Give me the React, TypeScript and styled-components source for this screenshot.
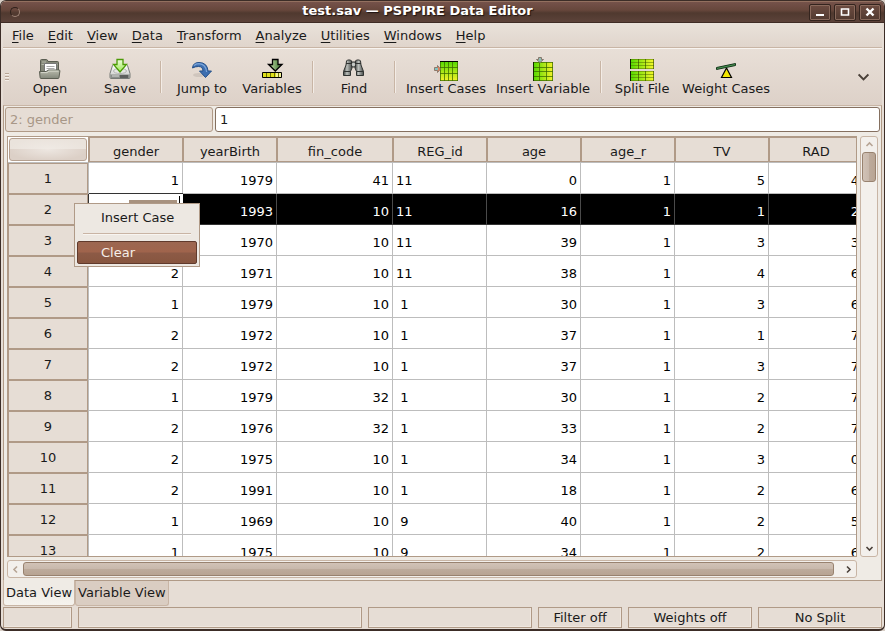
import React from "react";
import styled, { createGlobalStyle, css } from "styled-components";

const c = {
  base: "#e6ddd5",
  light: "#efebe5",
  line: "#b09a87",
  soft: "#c8b5a5",
  grid: "#bdbdbd",
  text: "#1a1a1a",
};

const GlobalStyle = createGlobalStyle`
  * { box-sizing: border-box; }
  body { margin: 0; background: #d9d0c8; }
  body, button, input, table { font: 13px/16px "DejaVu Sans", sans-serif; color: ${c.text}; }
  button { margin: 0; padding: 0; border: 0; background: none; }
`;

const Window = styled.div`
  display: flex;
  flex-direction: column;
  height: 100vh;
  min-height: 320px;
  overflow: hidden;
  border: 1px solid #3c2d27;
  border-bottom-width: 2px;
  border-radius: 6px;
  background: ${c.base};
`;

const TitleBar = styled.header`
  display: flex;
  align-items: center;
  height: 22px;
  flex: none;
  padding: 0 3px 0 9px;
  border-top: 1px solid #93705f;
  border-bottom: 1px solid #3f2c25;
  background: linear-gradient(#75524a, #67473c 40%, #50392f 55%, #5c433a);
`;

const WindowMenu = styled.button`
  width: 10px;
  height: 10px;
  border: 1px solid #2f211c;
  border-bottom-color: #a08578;
  border-right-color: #a08578;
  border-radius: 50%;
`;

const Title = styled.h1`
  flex: 1;
  margin: 0;
  padding: 0 0 2px 6px;
  font-size: 13px;
  line-height: 16px;
  text-align: center;
  color: #fff;
  text-shadow: 1px 1px 1px #1d1310;
`;

const WindowButtons = styled.div`
  display: flex;
  gap: 3px;
`;

const WindowButton = styled.button`
  width: 22px;
  height: 17px;
  border: 1px solid #34241e;
  border-radius: 2px;
  box-shadow: inset 0 0 0 1px #8a6a5c;
  background: linear-gradient(#6d4c41, #523a30);
  svg { display: block; margin: 0 auto; }
`;

const MenuBar = styled.nav`
  display: flex;
  align-items: center;
  flex: none;
  height: 25px;
  margin: 0 2px;
  padding: 2px 2px 0;
  border-bottom: 1px solid ${c.soft};
  background: linear-gradient(#e9e2da, #e0d5cc);
`;

const MenuItem = styled.button`
  padding: 0 7px;
  u { text-underline-offset: 2px; }
`;

const Toolbar = styled.div`
  display: flex;
  align-items: center;
  flex: none;
  height: 57px;
  margin: 0 2px;
  padding: 0 13px 0 2px;
  border-top: 1px solid #f8f4f0;
  background: linear-gradient(#e8dfd7, #ddd1c8);
`;

const Grip = styled.span`
  width: 4px;
  height: 8px;
  margin-right: 6px;
  background: repeating-linear-gradient(#b8a595 0 1px, #f3ede7 1px 2px, transparent 2px 3px);
`;

const ToolButton = styled.button`
  display: flex;
  flex-direction: column;
  align-items: center;
  min-width: 70px;
  padding: 0 5px;
  white-space: nowrap;
  svg { display: block; overflow: visible; }
`;

const ToolSeparator = styled.span`
  width: 2px;
  height: 32px;
  margin: 0 5px;
  border-left: 1px solid ${c.soft};
  border-right: 1px solid #f3ece6;
`;

const Overflow = styled.button`
  margin-left: auto;
  color: #4a4039;
  svg { display: block; }
`;

const Notebook = styled.main`
  display: flex;
  flex-direction: column;
  flex: 1;
  min-height: 0;
  margin: 0 2px;
  padding: 1px 1px 2px;
  border: 1px solid ${c.line};
  border-top-color: ${c.soft};
  background: ${c.light};
`;

const EntryRow = styled.div`
  display: grid;
  grid-template-columns: 208px 1fr;
  gap: 2px;
  flex: none;
`;

const Entry = styled.input`
  width: 100%;
  min-width: 0;
  height: 25px;
  padding: 0 4px;
  border: 1px solid #857060;
  border-radius: 3px;
  outline: 0;
  background: #fff;
  &:disabled {
    color: #a89787;
    background: ${c.base};
    border-color: ${c.line};
  }
`;

const SheetArea = styled.div`
  display: grid;
  grid-template-columns: minmax(0, 1fr) 18px;
  grid-template-rows: minmax(0, 1fr) 18px;
  gap: 3px;
  flex: 1;
  min-height: 0;
  margin: 4px 2px 0 2px;
`;

const Sheet = styled.div`
  overflow: hidden;
  border: 1px solid ${c.line};
  background: #fff;
`;

const Table = styled.table`
  width: 855px;
  table-layout: fixed;
  border-collapse: separate;
  border-spacing: 0;
`;

const Col = styled.col<{ $width: number }>`
  width: ${(p) => p.$width}px;
`;

const headCell = css`
  padding: 0;
  font-weight: normal;
  text-align: center;
  background: ${c.base};
`;

const ColumnHead = styled.th`
  ${headCell}
  height: 26px;
  padding-top: 5px;
  border-bottom: 1px solid ${c.grid};
  box-shadow: inset 0 0 0 1px ${c.line};
`;

const Corner = styled.th`
  ${headCell}
  height: 26px;
  padding: 1px;
  background: #fff;
  border-bottom: 1px solid ${c.grid};
  border-right: 1px solid ${c.line};
`;

const CornerButton = styled.button`
  display: block;
  width: 78px;
  height: 23px;
  border: 1px solid #b5a08f;
  border-radius: 3px;
  background: radial-gradient(ellipse at center, #f1ece7cc, transparent 75%), linear-gradient(#eae3dc 50%, #dcd0c7 50%);
`;

const RowHead = styled.th`
  ${headCell}
  height: 31px;
  border-right: 1px solid ${c.grid};
  box-shadow: inset 0 0 0 1px ${c.line};
`;

const Cell = styled.td<{ $left?: boolean; $selected?: boolean }>`
  height: 31px;
  padding: 5px 3px 0;
  white-space: pre;
  text-align: ${(p) => (p.$left ? "left" : "right")};
  border-right: 1px solid ${(p) => (p.$selected ? "#4a4a4a" : c.grid)};
  border-bottom: 1px solid ${(p) => (p.$selected ? "#333" : c.grid)};
  color: ${(p) => (p.$selected ? "#fff" : "#000")};
  background: ${(p) => (p.$selected ? "#000" : "#fff")};
`;

const ActiveCell = styled.td`
  height: 31px;
  padding: 0;
  box-shadow: 0 -1px #333, -1px 0 #333;
  border-bottom: 1px solid #333;
`;

const CellInput = styled.input`
  display: block;
  width: 100%;
  height: 30px;
  padding: 5px 5px 0;
  border: 0;
  outline: 0;
  text-align: right;
  background:
    linear-gradient(#a8927f, #a8927f) right 6px top 6px / 48px 20px no-repeat,
    linear-gradient(#000, #000) right 3px top 2px / 1px 24px no-repeat,
    #fff;
`;

const ScrollBar = styled.div<{ $vertical?: boolean }>`
  display: flex;
  flex-direction: ${(p) => (p.$vertical ? "column" : "row")};
  border: 1px solid ${c.soft};
  border-radius: 3px;
  background: #f3f0ec;
`;

const ScrollArrow = styled.button<{ $dim?: boolean }>`
  display: flex;
  align-items: center;
  justify-content: center;
  flex: 0 0 15px;
  color: ${(p) => (p.$dim ? "#b7a595" : "#4a4039")};
`;

const Track = styled.div<{ $vertical?: boolean }>`
  flex: 1;
  padding: ${(p) => (p.$vertical ? "0 1px" : "1px 0")};
  margin: ${(p) => (p.$vertical ? "0" : "0 7px 0 0")};
`;

const Thumb = styled.div<{ $vertical?: boolean }>`
  height: ${(p) => (p.$vertical ? "30px" : "14px")};
  border: 1px solid #98826f;
  border-radius: 3px;
  background: linear-gradient(${(p) => (p.$vertical ? "to right" : "to bottom")}, #d1c2b6, #c8b8ab 50%, #bdab9c 50%, #b8a493);
`;

const Tabs = styled.div`
  display: flex;
  flex: none;
  height: 25px;
  margin: 0 2px 1px;
`;

const Tab = styled.button<{ $current?: boolean }>`
  height: ${(p) => (p.$current ? "26px" : "25px")};
  padding: 0 2px;
  margin-top: ${(p) => (p.$current ? "-1px" : "0")};
  border: 1px solid ${c.soft};
  border-top: 0;
  border-radius: 0 0 3px 3px;
  background: ${(p) => (p.$current ? "linear-gradient(#efebe5 45%, #f6f3ee)" : "#dacdc2")};
`;

const StatusBar = styled.footer`
  display: grid;
  grid-template-columns: 69px 1fr 164px 84px 124px 124px;
  gap: 6px;
  flex: none;
  margin: 0 2px 1px;
`;

const Status = styled.div`
  height: 21px;
  padding-top: 2px;
  text-align: center;
  border: 1px solid ${c.line};
  box-shadow: inset -1px -1px #efe7e0;
`;

const ContextMenu = styled.div`
  position: absolute;
  left: 74px;
  top: 203px;
  width: 126px;
  padding: 2px;
  border: 1px solid ${c.line};
  background: #ede8e2;
`;

const ContextItem = styled.button<{ $active?: boolean }>`
  display: block;
  width: 100%;
  height: 23px;
  padding: 0 23px;
  text-align: left;
  white-space: nowrap;
  border: 1px solid ${(p) => (p.$active ? "#603a2c" : "transparent")};
  border-radius: 2px;
  color: ${(p) => (p.$active ? "#f6eee8" : c.text)};
  background: ${(p) => (p.$active ? "linear-gradient(#9c6751, #a0644c 48%, #8c5a46 52%, #87553f)" : "none")};
`;

const ContextRule = styled.hr`
  height: 2px;
  margin: 4px 6px 6px;
  border: 0;
  border-top: 1px solid #c9b4a4;
  background: #f8f5f1;
`;

const Chevron = ({ d, size = 9 }: { d: string; size?: number }) => (
  <svg width={size} height={size} viewBox="0 0 9 9" fill="none" stroke="currentColor" strokeWidth="1.6">
    <path d={d} />
  </svg>
);

const OpenIcon = () => (
  <svg width="24" height="24" viewBox="0 0 24 24">
    <defs>
      <linearGradient id="folder" x2="0" y2="1"><stop stopColor="#b9bbac" /><stop offset="1" stopColor="#83877a" /></linearGradient>
    </defs>
    <path d="M2.500 20V3.500q0-1 1-1h5q1 0 1.500 2h9.500q1 0 1 1V20z" fill="#858879" stroke="#5b5e52" />
    <path d="M4 5h4M3.500 7.500h16" stroke="#b3b6a8" />
    <path d="M6.500 6.500h12v10h-12z" fill="#fff" stroke="#777" />
    <path d="M8.500 9.500h8M8.500 11.500h8M8.500 13.500h6" stroke="#aaa" />
    <path d="M1.500 14.500h7l2-1.500h10.500q1 0 .9 1L21 20.500q-.2 1-1 1H3q-.8 0-.9-1z" fill="url(#folder)" stroke="#5b5e52" />
    <path d="M3 15.600h6l2-1.500h9.500" fill="none" stroke="#d5d7cc" />
  </svg>
);

const SaveIcon = () => (
  <svg width="24" height="24" viewBox="0 0 24 24">
    <defs>
      <linearGradient id="disk" x2="0" y2="1"><stop stopColor="#fff" /><stop offset="1" stopColor="#c4c6c2" /></linearGradient>
      <linearGradient id="green" x2="0" y2="1"><stop stopColor="#effde0" /><stop offset="1" stopColor="#9bea4f" /></linearGradient>
    </defs>
    <path d="M4.500 8.500q.3-1 1.200-1h12.600q1 0 1.200 1l2.500 8v4q0 1-1 1H3q-1 0-1-1v-4z" fill="url(#disk)" stroke="#777b77" />
    <path d="M2.500 17.500h19v3.500h-19z" fill="#8a8e8a" />
    <path d="M4 19h7" stroke="#d8dad8" /><path d="M13 18v3M15 18v3M17 18v3M19 18v3" stroke="#333" />
    <ellipse cx="12" cy="14" rx="6.500" ry="2.500" fill="#e6e7e5" stroke="#b5b7b3" />
    <path d="M9 2.500h6v5h3.500L12 15 5.500 7.500H9z" fill="url(#green)" stroke="#4b9a06" strokeWidth="1.300" />
  </svg>
);

const JumpIcon = () => (
  <svg width="24" height="24" viewBox="0 0 24 24">
    <ellipse cx="9" cy="18" rx="6" ry="2" fill="#cfc5bd" />
    <path d="M2.500 11Q3 5.500 9 5.500q8.500.2 9 8.500h3.500l-6 6.500-6-6.500H13q-.2-4.500-4.500-4.500Q5 9.500 2.500 11z" fill="#3e6fb0" stroke="#24508a" strokeLinejoin="round" />
    <path d="M4 8.700Q5.500 6.600 9 6.600q7 .4 7.600 8.400" fill="none" stroke="#7ba5da" strokeWidth="1.200" />
  </svg>
);

const VariablesIcon = () => (
  <svg width="24" height="24" viewBox="0 0 24 24">
    <defs><linearGradient id="dark"><stop stopColor="#1f431a" /><stop offset=".3" stopColor="#9fc088" /><stop offset="1" stopColor="#2f6a24" /></linearGradient></defs>
    <path d="M12.500 2.500h5.500v5h4L15.300 14 8.500 7.500h4z" fill="url(#dark)" stroke="#000" strokeWidth="1.300" />
    <path d="M2.500 15.500h19v5h-19z" fill="#dfe01d" stroke="#000" />
    <path d="M16 16h5v4h-5z" fill="#f2f29a" />
    <path d="M6.500 16v4M10.500 16v4M14.500 16v4M18.500 16v4" stroke="#6b6e00" />
  </svg>
);

const FindIcon = () => (
  <svg width="24" height="24" viewBox="0 0 24 24">
    <defs><linearGradient id="tube"><stop stopColor="#3b3f3d" /><stop offset=".4" stopColor="#bcc0bc" /><stop offset="1" stopColor="#484c4a" /></linearGradient></defs>
    <path d="M9 5h5v5H9z" fill="#868b87" stroke="#303331" />
    <path d="M4.500 4l1-1h3l1 1v4l.5 3-1.500 3.500v4H1.500v-4L4 8z" fill="url(#tube)" stroke="#303331" />
    <path d="M18.500 4l-1-1h-3l-1 1v4l-.5 3 1.500 3.500v4h7v-4L19 8z" fill="url(#tube)" stroke="#303331" />
    <path d="M4 6.500h5.500M13.500 6.500H19M2 14.500h6.500M14.500 14.500h7" stroke="#303331" />
    <circle cx="11.500" cy="7.500" r="1.700" fill="#c7cac7" />
  </svg>
);

const InsertCasesIcon = () => (
  <svg width="24" height="24" viewBox="0 0 24 24">
    <defs><linearGradient id="cases" x2="0" y2="1"><stop stopColor="#4fd800" /><stop offset="1" stopColor="#f6f22a" /></linearGradient></defs>
    <path d="M6 4h18v20H6z" fill="url(#cases)" />
    <path d="M6.500 4v20M10.500 4v20M14.500 4v20M18.500 4v20M23.500 4v20M6 10.500h18M6 16.500h18M6 23.500h18" stroke="#3a6a00" strokeOpacity=".75" />
    <path d="M6 4.500h18" stroke="#000" />
    <path d="M.5 10.500h3V8.500l3 3.500-3 3.500v-2h-3z" fill="#ef8158" stroke="#8b7a6c" />
    <path d="M1 11h3v2H1z" fill="#81c3c0" />
  </svg>
);

const InsertVariableIcon = () => (
  <svg width="24" height="24" viewBox="0 0 24 24">
    <defs><linearGradient id="variable"><stop stopColor="#4fd800" /><stop offset="1" stopColor="#f6f22a" /></linearGradient></defs>
    <path d="M2 5h20v19H2z" fill="url(#variable)" />
    <path d="M2 10.500h20M2 14.500h20M2 19.500h20M2 23.500h20M8.500 5v19M15.500 5v19M21.500 5v19M2 5.500h20" stroke="#3a6a00" strokeOpacity=".75" />
    <path d="M2.500 5v19" stroke="#162800" />
    <path d="M7.500.5h3v2h2L9 5.500l-3.500-3h2z" fill="#8fbdb5" stroke="#85786c" />
  </svg>
);

const SplitFileIcon = () => (
  <svg width="24" height="24" viewBox="0 0 24 24">
    <defs><linearGradient id="split"><stop stopColor="#4fdb00" /><stop offset="1" stopColor="#f7f72a" /></linearGradient></defs>
    <path d="M0 2h24v10H0zM0 14h24v10H0z" fill="url(#split)" />
    <path d="M0 2.500h24M0 5.500h24M0 8.500h24M0 11.500h24M0 14.500h24M0 17.500h24M0 20.500h24M0 23.500h24" stroke="#547400" strokeOpacity=".55" />
    <path d="M8.500 2v10M15.500 2v10M23.500 2v10M8.500 14v10M15.500 14v10M23.500 14v10" stroke="#314d00" strokeOpacity=".65" />
    <path d="M.5 2v10M.5 14v10" stroke="#0c1a00" />
  </svg>
);

const WeightIcon = () => (
  <svg width="24" height="24" viewBox="0 0 24 24">
    <path d="M12.500 11L17.500 20.500h-10z" fill="#f2e600" stroke="#000" strokeWidth="1.200" />
    <path d="M2.500 10.500l19-4v2l-19 4z" fill="#4d9b55" stroke="#12351a" />
  </svg>
);

const menus = ["File", "Edit", "View", "Data", "Transform", "Analyze", "Utilities", "Windows", "Help"];

const toolGroups: [string, React.FC][][] = [
  [["Open", OpenIcon], ["Save", SaveIcon]],
  [["Jump to", JumpIcon], ["Variables", VariablesIcon]],
  [["Find", FindIcon]],
  [["Insert Cases", InsertCasesIcon], ["Insert Variable", InsertVariableIcon]],
  [["Split File", SplitFileIcon], ["Weight Cases", WeightIcon]],
];

const columns: [string, number][] = [
  ["gender", 94], ["yearBirth", 94], ["fin_code", 116], ["REG_id", 94],
  ["age", 94], ["age_r", 94], ["TV", 94], ["RAD", 94],
];

const rows: string[][] = [
  ["1", "1979", "41", "11", "0", "1", "5", "4"],
  ["1", "1993", "10", "11", "16", "1", "1", "2"],
  ["1", "1970", "10", "11", "39", "1", "3", "3"],
  ["2", "1971", "10", "11", "38", "1", "4", "6"],
  ["1", "1979", "10", " 1", "30", "1", "3", "6"],
  ["2", "1972", "10", " 1", "37", "1", "1", "7"],
  ["2", "1972", "10", " 1", "37", "1", "3", "7"],
  ["1", "1979", "32", " 1", "30", "1", "2", "7"],
  ["2", "1976", "32", " 1", "33", "1", "2", "7"],
  ["2", "1975", "10", " 1", "34", "1", "3", "0"],
  ["2", "1991", "10", " 1", "18", "1", "2", "6"],
  ["1", "1969", "10", " 9", "40", "1", "2", "5"],
  ["1", "1975", "10", " 9", "34", "1", "2", "6"],
];

const SELECTED = 1;
const STRING_COLUMN = 3;

export default function App() {
  return (
    <>
      <GlobalStyle />
      <Window>
        <TitleBar>
          <WindowMenu aria-label="Window menu" />
          <Title>test.sav — PSPPIRE Data Editor</Title>
          <WindowButtons>
            <WindowButton aria-label="Minimize">
              <svg width="12" height="12" viewBox="0 0 12 12"><path d="M2 9h8" stroke="#fff" strokeWidth="2" /></svg>
            </WindowButton>
            <WindowButton aria-label="Maximize">
              <svg width="12" height="12" viewBox="0 0 12 12"><path d="M2.500 3h7v6h-7z" fill="none" stroke="#fff" strokeWidth="1.600" /></svg>
            </WindowButton>
            <WindowButton aria-label="Close">
              <svg width="12" height="12" viewBox="0 0 12 12"><path d="M2.500 2.500l7 7M9.500 2.500l-7 7" stroke="#fff" strokeWidth="2.400" /></svg>
            </WindowButton>
          </WindowButtons>
        </TitleBar>
        <MenuBar>
          {menus.map((name) => (
            <MenuItem key={name}><u>{name[0]}</u>{name.slice(1)}</MenuItem>
          ))}
        </MenuBar>
        <Toolbar>
          <Grip />
          {toolGroups.map((group, i) => (
            <React.Fragment key={i}>
              {i > 0 && <ToolSeparator />}
              {group.map(([label, Icon]) => (
                <ToolButton key={label}><Icon />{label}</ToolButton>
              ))}
            </React.Fragment>
          ))}
          <Overflow aria-label="More tools"><Chevron d="M0.500 2l4 4 4-4" size={11} /></Overflow>
        </Toolbar>
        <Notebook>
          <EntryRow>
            <Entry disabled aria-label="Cell reference" value="2: gender" />
            <Entry aria-label="Cell value" defaultValue="1" />
          </EntryRow>
          <SheetArea>
            <Sheet>
              <Table>
                <colgroup>
                  <Col $width={81} />
                  {columns.map(([name, width]) => <Col key={name} $width={width} />)}
                </colgroup>
                <thead>
                  <tr>
                    <Corner><CornerButton aria-label="Select all" /></Corner>
                    {columns.map(([name]) => <ColumnHead key={name} scope="col">{name}</ColumnHead>)}
                  </tr>
                </thead>
                <tbody>
                  {rows.map((row, r) => (
                    <tr key={r}>
                      <RowHead scope="row">{r + 1}</RowHead>
                      {row.map((value, i) =>
                        r === SELECTED && i === 0 ? (
                          <ActiveCell key={i}><CellInput aria-label="Edit gender" defaultValue={value} /></ActiveCell>
                        ) : (
                          <Cell key={i} $left={i === STRING_COLUMN} $selected={r === SELECTED}>{value}</Cell>
                        )
                      )}
                    </tr>
                  ))}
                </tbody>
              </Table>
            </Sheet>
            <ScrollBar $vertical>
              <ScrollArrow $dim aria-label="Scroll up"><Chevron d="M1.500 6l3-3 3 3" /></ScrollArrow>
              <Track $vertical><Thumb $vertical /></Track>
              <ScrollArrow aria-label="Scroll down"><Chevron d="M1.500 3l3 3 3-3" /></ScrollArrow>
            </ScrollBar>
            <ScrollBar>
              <ScrollArrow $dim aria-label="Scroll left"><Chevron d="M6 1.500l-3 3 3 3" /></ScrollArrow>
              <Track><Thumb /></Track>
              <ScrollArrow aria-label="Scroll right"><Chevron d="M3 1.500l3 3-3 3" /></ScrollArrow>
            </ScrollBar>
          </SheetArea>
        </Notebook>
        <Tabs>
          <Tab $current>Data View</Tab>
          <Tab>Variable View</Tab>
        </Tabs>
        <StatusBar>
          <Status />
          <Status />
          <Status />
          <Status>Filter off</Status>
          <Status>Weights off</Status>
          <Status>No Split</Status>
        </StatusBar>
      </Window>
      <ContextMenu>
        <ContextItem>Insert Case</ContextItem>
        <ContextRule />
        <ContextItem $active>Clear</ContextItem>
      </ContextMenu>
    </>
  );
}
